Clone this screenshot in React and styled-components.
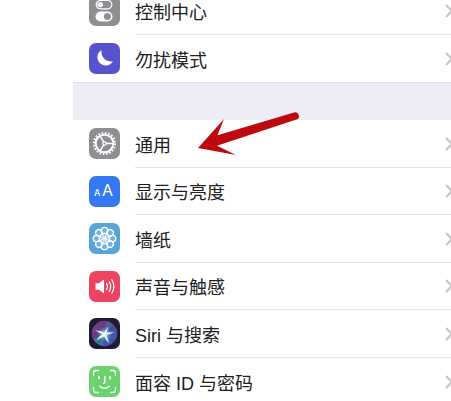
import styled, { createGlobalStyle } from 'styled-components';

const petals = [0, 45, 90, 135, 180, 225, 270, 315];

const ControlIcon = () => (
  <Glyph viewBox="0 0 31 31">
    <rect x="7.2" y="5.4" width="15.6" height="8.4" rx="4.2" fill="none" stroke="#fff" strokeWidth="1.3" />
    <circle cx="11.2" cy="9.6" r="2.7" fill="#fff" />
    <rect x="6.5" y="16.4" width="17" height="10.2" rx="5.1" fill="#fff" />
    <circle cx="18.4" cy="21.5" r="3.5" fill="#8e8e93" />
  </Glyph>
);

const MoonIcon = () => (
  <Glyph viewBox="0 0 31 31">
    <path d="M12.6 7A8.3 8.3 0 1 0 24 18.2A9.6 9.6 0 0 1 12.6 7Z" fill="#fff" />
  </Glyph>
);

const GearIcon = () => (
  <Glyph viewBox="0 0 31 31" fill="none" stroke="#fff">
    <circle cx="15.5" cy="15.5" r="10.6" strokeWidth="2" strokeDasharray="1.7 1.63" />
    <circle cx="15.5" cy="15.5" r="8.8" strokeWidth="2" />
    <circle cx="15.5" cy="15.5" r="1.6" strokeWidth="1.2" />
    <path d="M17 15.5H24M14.7 14.1L11.2 8.1M14.7 16.9L11.2 22.9" strokeWidth="1.5" />
  </Glyph>
);

const DisplayIcon = () => (
  <Glyph viewBox="0 0 31 31" fill="#fff" fontFamily="Inter, sans-serif">
    <text x="5" y="20" fontSize="9" fontWeight="500">A</text>
    <text x="13" y="20" fontSize="16" fontWeight="400">A</text>
  </Glyph>
);

const FlowerIcon = () => (
  <Glyph viewBox="0 0 31 31" fill="none" stroke="#fff">
    {petals.map((angle) => (
      <g key={angle} transform={`rotate(${angle} 15.5 15.5)`}>
        <circle cx="15.5" cy="7.5" r="3.2" fill="#fff" fillOpacity="0.15" strokeWidth="1.3" />
        <circle cx="15.5" cy="12" r="2" strokeWidth="0.8" />
      </g>
    ))}
    <circle cx="15.5" cy="15.5" r="1.4" fill="#fff" stroke="none" />
  </Glyph>
);

const SoundIcon = () => (
  <Glyph viewBox="0 0 31 31" fill="none" stroke="#fff" strokeLinecap="round">
    <path d="M6.5 12.2H10L15 8.6V22.4L10 18.8H6.5Z" fill="#fff" stroke="none" />
    <path d="M17.6 12.6Q19.4 15.5 17.6 18.4M20.2 10.7Q23.2 15.5 20.2 20.3M22.8 8.8Q27 15.5 22.8 22.2" strokeWidth="1.2" />
  </Glyph>
);

const SiriIcon = () => (
  <Glyph viewBox="0 0 31 31">
    <defs>
      <linearGradient id="orb" x1="0" y1="0" x2="1" y2="1">
        <stop offset="0" stopColor="#a03a8c" />
        <stop offset="0.4" stopColor="#5a3a82" />
        <stop offset="0.7" stopColor="#3a5cb0" />
        <stop offset="1" stopColor="#3a3fa0" />
      </linearGradient>
      <radialGradient id="shine">
        <stop offset="0" stopColor="#fff" />
        <stop offset="0.3" stopColor="#9de9ee" stopOpacity="0.7" />
        <stop offset="1" stopColor="#55b7de" stopOpacity="0" />
      </radialGradient>
    </defs>
    <circle cx="15.5" cy="15.5" r="12.4" fill="url(#orb)" stroke="#7d4a86" strokeWidth="0.7" />
    <path d="M15 16L16.5 4Q22 4 24 7Q20 12 15 16Z" fill="#4c6cab" opacity="0.7" />
    <path d="M15 16L4 21Q8 27.5 14 27.5Z" fill="#258ea1" opacity="0.7" />
    <circle cx="15.5" cy="16" r="7.5" fill="url(#shine)" />
    <path d="M6 12.5Q11 12 15.5 14.8L25.5 14Q21 16.5 17.4 17L20.5 25.5Q16.5 22 15.2 18.2L7.5 22.5Q10 18 13.4 16.2Z" fill="#fff" opacity="0.85" />
    <path d="M15 15L19.5 8L17.2 15.6Z" fill="#fff" opacity="0.9" />
  </Glyph>
);

const FaceIcon = () => (
  <Glyph viewBox="0 0 31 31" fill="none" stroke="#fff" strokeLinecap="round" strokeWidth="1.3">
    <path d="M4.5 9.5V7Q4.5 4.5 7 4.5H9.5M21.5 4.5H24Q26.5 4.5 26.5 7V9.5M26.5 21.5V24Q26.5 26.5 24 26.5H21.5M9.5 26.5H7Q4.5 26.5 4.5 24V21.5" />
    <path d="M10 10.8V12.6M21 10.8V12.6" strokeWidth="1.9" />
    <path d="M15.8 10.5V16Q15.8 17.2 14.4 17.2M10.8 20.2Q15.5 24.4 20.2 20.2" strokeWidth="1.5" />
  </Glyph>
);

const groups = [
  [
    { label: '控制中心', color: '#8e8e93', Icon: ControlIcon },
    { label: '勿扰模式', color: '#5752ce', Icon: MoonIcon },
  ],
  [
    { label: '通用', color: '#8e8e93', Icon: GearIcon },
    { label: '显示与亮度', color: '#3478f2', Icon: DisplayIcon },
    { label: '墙纸', color: '#55a5d7', Icon: FlowerIcon },
    { label: '声音与触感', color: '#eb4360', Icon: SoundIcon },
    { label: 'Siri 与搜索', color: '#1d1b35', Icon: SiriIcon },
    { label: '面容 ID 与密码', color: '#6bd36e', Icon: FaceIcon },
  ],
];

function SettingsGroup({ items }) {
  return (
    <Group>
      {items.map(({ label, color, Icon }) => (
        <li key={label}>
          <Row href="#">
            <Tile $color={color} aria-hidden="true">
              <Icon />
            </Tile>
            <Body>
              {label}
              <Chevron viewBox="0 0 8 14" aria-hidden="true">
                <path d="M1 1L7 7L1 13" />
              </Chevron>
            </Body>
          </Row>
        </li>
      ))}
    </Group>
  );
}

function App() {
  return (
    <Page>
      <GlobalStyle />
      <Settings>
        {groups.map((items) => (
          <SettingsGroup key={items[0].label} items={items} />
        ))}
      </Settings>
      <Pointer viewBox="0 0 102 38" aria-hidden="true">
        <path d="M1 30L27 1L20.5 17.2L97 -5.4A3.5 3.5 0 0 1 99.4 1.6L20 27.8L39 37Z" />
      </Pointer>
    </Page>
  );
}

export default App;

const GlobalStyle = createGlobalStyle`
  * {
    box-sizing: border-box;
  }

  body {
    margin: 0;
    background: #fff;
    color: #202022;
    font-family: "Liberation Sans", "Noto Sans CJK SC", sans-serif;
    font-size: 18px;
  }
`;

const Page = styled.main`
  position: relative;
  height: 100vh;
  padding-left: 73px;
  overflow: hidden;
`;

const Settings = styled.div`
  display: flex;
  flex-direction: column;
  gap: 37px;
  margin: -13px -2px 0 0;
  background: #eeedf5;
`;

const Row = styled.a`
  display: flex;
  align-items: center;
  gap: 15px;
  height: 100%;
  padding-left: 16px;
  color: inherit;
  text-decoration: none;
`;

const Tile = styled.span`
  flex: none;
  width: 31px;
  height: 31px;
  border-radius: 7px;
  overflow: hidden;
  background: ${props => props.$color};
`;

const Glyph = styled.svg`
  display: block;
  width: 100%;
  height: 100%;
`;

const Body = styled.span`
  flex: 1;
  display: flex;
  align-items: center;
  justify-content: space-between;
  height: 100%;
  padding-top: 1px;
  border-bottom: 1px solid #e3e3e5;
`;

const Group = styled.ul`
  display: grid;
  grid-auto-rows: 1fr;
  min-height: 96px;
  margin: 0;
  padding: 0;
  list-style: none;
  background: #fff;
  border-bottom: 1px solid #e0e0e5;

  & + & {
    min-height: 286px;
  }

  li:last-child ${Body} {
    border-bottom: none;
  }
`;

const Chevron = styled.svg`
  width: 8px;
  height: 14px;
  fill: none;
  stroke: #c4c4c8;
  stroke-width: 2;
`;

const Pointer = styled.svg`
  position: absolute;
  top: 118px;
  left: 197px;
  width: 102px;
  height: 38px;
  overflow: visible;
  fill: #bd0a0f;
`;
